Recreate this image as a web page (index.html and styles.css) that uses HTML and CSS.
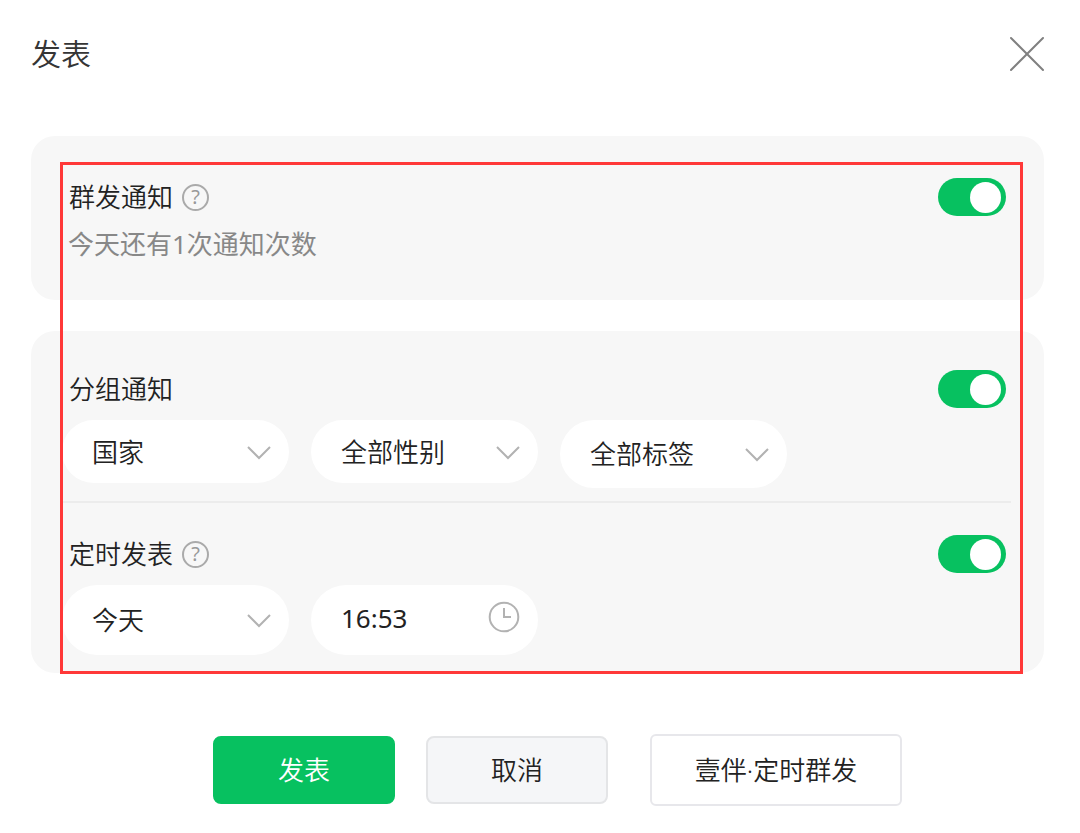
FILE: index.html
```html
<!DOCTYPE html>
<html lang="zh-CN">
<head>
    <meta charset="UTF-8">
    <title>发表</title>
    <meta name="viewport" content="width=device-width, initial-scale=1.0">
    <link rel="stylesheet" href="styles.css">
</head>
<body>
    <form class="dialog">
        <header class="dialog-header">
            <h1>发表</h1>
            <button type="button" class="close" aria-label="关闭">
                <svg width="36" height="36" viewBox="0 0 36 36">
                    <path d="M3 2L35 34M35 2L3 34"/>
                </svg>
            </button>
        </header>

        <main class="settings">
            <section class="card">
                <div class="row-head">
                    <label for="mass">群发通知</label>
                    <button type="button" class="help">?</button>
                    <input type="checkbox" id="mass" class="switch" checked>
                </div>
                <p class="hint">今天还有1次通知次数</p>
            </section>

            <section class="card">
                <div class="group">
                    <div class="row-head">
                        <label for="grouped">分组通知</label>
                        <input type="checkbox" id="grouped" class="switch" checked>
                    </div>
                    <div class="fields">
                        <div class="field">
                            <select aria-label="国家">
                                <option>国家</option>
                            </select>
                            <svg class="chevron" width="24" height="14" viewBox="0 0 24 14"><path d="M1 2L12 13L23 2"/></svg>
                        </div>
                        <div class="field">
                            <select aria-label="性别">
                                <option>全部性别</option>
                            </select>
                            <svg class="chevron" width="24" height="14" viewBox="0 0 24 14"><path d="M1 2L12 13L23 2"/></svg>
                        </div>
                        <div class="field field-tag">
                            <select aria-label="标签">
                                <option>全部标签</option>
                            </select>
                            <svg class="chevron" width="24" height="14" viewBox="0 0 24 14"><path d="M1 2L12 13L23 2"/></svg>
                        </div>
                    </div>
                </div>

                <div class="group">
                    <div class="row-head">
                        <label for="timed">定时发表</label>
                        <button type="button" class="help">?</button>
                        <input type="checkbox" id="timed" class="switch" checked>
                    </div>
                    <div class="fields">
                        <div class="field field-time">
                            <select aria-label="日期">
                                <option>今天</option>
                            </select>
                            <svg class="chevron" width="24" height="14" viewBox="0 0 24 14"><path d="M1 2L12 13L23 2"/></svg>
                        </div>
                        <div class="field field-time">
                            <input type="text" aria-label="时间" value="16:53">
                            <svg class="clock" width="32" height="32" viewBox="0 0 32 32">
                                <circle cx="16" cy="16" r="14.3"/>
                                <path d="M16 7V16H23"/>
                            </svg>
                        </div>
                    </div>
                </div>
            </section>

            <div class="highlight"></div>
        </main>

        <footer class="actions">
            <button type="submit" class="btn btn-primary">发表</button>
            <button type="button" class="btn btn-cancel">取消</button>
            <button type="button" class="btn btn-plugin">壹伴·定时群发</button>
        </footer>
    </form>
</body>
</html>
```
FILE: styles.css
```css
:root {
    --green: #07c160;
    --card: #f7f7f7;
    --text: #222;
    --muted: #888;
    --icon: #b2b2b2;
    --red: #ff3838;
}

* {
    box-sizing: border-box;
}

body {
    margin: 0;
    background: #fff;
    color: var(--text);
    font-family: "Noto Sans", "Noto Sans CJK SC", sans-serif;
    font-size: 26px;
    font-weight: 350;
    line-height: 38px;
}

button, input, select {
    font: inherit;
    color: inherit;
}

button {
    cursor: pointer;
}

.dialog {
    padding: 36px 36px 24px 31px;
}

.dialog-header {
    display: flex;
    align-items: center;
    justify-content: space-between;
    height: 36px;
    margin-bottom: 64px;
}

h1 {
    margin: 0;
    color: #353535;
    font-size: 30px;
    font-weight: 350;
}

.close {
    display: flex;
    padding: 0;
    border: none;
    background: none;
}

svg {
    fill: none;
    stroke: var(--icon);
    stroke-width: 2;
    overflow: visible;
}

.close svg {
    stroke: #808080;
    stroke-linecap: round;
}

.settings {
    position: relative;
    display: grid;
    gap: 31px;
}

.card {
    padding: 42px 33px 37px 31px;
    border-radius: 24px;
    background: var(--card);
}

.card:nth-child(2) {
    padding: 39px 33px 18px 31px;
}

.row-head {
    display: flex;
    align-items: center;
    gap: 9px;
    height: 38px;
    padding: 0 5px 0 7px;
}

.hint {
    margin: 9px 0 0;
    padding-left: 6px;
    color: var(--muted);
    font-weight: 400;
}

.help {
    width: 27px;
    height: 27px;
    padding: 0;
    border: 2px solid #aaa;
    border-radius: 50%;
    background: none;
    color: #999;
    font-size: 20px;
    font-weight: 400;
    line-height: 22px;
}

.switch {
    appearance: none;
    display: flex;
    align-items: center;
    width: 68px;
    height: 38px;
    margin: 0 0 0 auto;
    padding: 0 5px;
    border-radius: 19px;
    background: #d9d9d9;
    cursor: pointer;
}

.switch::before {
    content: "";
    width: 31px;
    height: 31px;
    border-radius: 50%;
    background: #fff;
}

.switch:checked {
    justify-content: flex-end;
    background: var(--green);
}

.group + .group {
    margin-top: 13px;
    padding-top: 32px;
    border-top: 2px solid #ececec;
}

.fields {
    display: flex;
    align-items: flex-start;
    gap: 22px;
    margin-top: 12px;
}

.field {
    position: relative;
    width: 227px;
    height: 63px;
}

.field-tag {
    height: 68px;
}

.field-time {
    height: 70px;
}

.field select,
.field input {
    appearance: none;
    width: 100%;
    height: 100%;
    padding: 0 56px 0 30px;
    border: none;
    border-radius: 36px;
    outline: none;
    background: #fff;
}

.field input {
    padding-bottom: 4px;
    font-weight: 400;
}

.chevron,
.clock {
    position: absolute;
    top: 0;
    bottom: 0;
    right: 18px;
    margin: auto 0;
    pointer-events: none;
}

.clock {
    bottom: 6px;
}

/* red frame drawn over both cards */
.highlight {
    position: absolute;
    top: 26px;
    right: 21px;
    bottom: -1px;
    left: 29px;
    border: 3px solid var(--red);
    pointer-events: none;
}

.actions {
    display: flex;
    align-items: center;
    justify-content: center;
    gap: 31px;
    margin-top: 61px;
    padding-left: 40px;
}

.btn {
    width: 182px;
    height: 68px;
    padding: 0;
    border: 2px solid #e4e5e7;
    border-radius: 8px;
}

.btn-primary {
    border-color: var(--green);
    background: var(--green);
    color: #fff;
}

.btn-cancel {
    background: #f5f6f8;
}

.btn-plugin {
    width: 252px;
    height: 72px;
    margin-left: 11px;
    border-color: #e7e7eb;
    border-radius: 6px;
    background: #fff;
}
```
